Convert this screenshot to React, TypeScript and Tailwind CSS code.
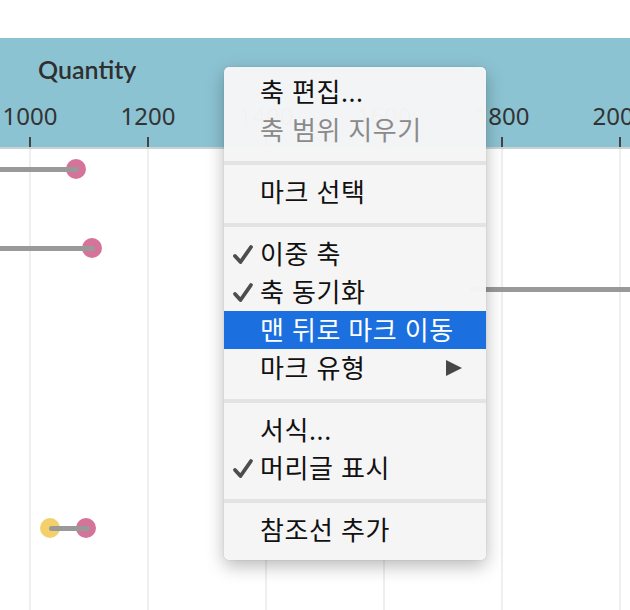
import React from 'react';

const ticks = [1000, 1200, 1400, 1600, 1800, 2000];

type Item = { label: string; check?: boolean; disabled?: boolean; active?: boolean; submenu?: boolean } | 'sep';

const items: Item[] = [
  { label: '축 편집...' },
  { label: '축 범위 지우기', disabled: true },
  'sep',
  { label: '마크 선택' },
  'sep',
  { label: '이중 축', check: true },
  { label: '축 동기화', check: true },
  { label: '맨 뒤로 마크 이동', active: true },
  { label: '마크 유형', submenu: true },
  'sep',
  { label: '서식...' },
  { label: '머리글 표시', check: true },
  'sep',
  { label: '참조선 추가' },
];

const CheckMark = () => (
  <svg width="22" height="22" viewBox="0 0 22 22" className="absolute left-[8px] top-[9px]">
    <path d="M3 12 L8.5 18 L19 3" fill="none" stroke="#4d4d4d" strokeWidth="3.8" strokeLinecap="round" strokeLinejoin="round" />
  </svg>
);

const ContextMenu = () => (
  <div className="absolute left-[224px] top-[67px] w-[262px] rounded-[5px] bg-[#f5f5f5]/[0.985] pt-[6px] pb-[11px] shadow-[0_6px_18px_rgba(0,0,0,0.28),0_0_1px_rgba(0,0,0,0.3)]">
    {items.map((it, i) =>
      it === 'sep' ? (
        <div key={i} className="pt-[12px] pb-[8px]">
          <div className="h-[4px] bg-[#e3e3e3]" />
        </div>
      ) : (
        <div
          key={i}
          className={`relative flex h-[38px] items-center pl-[36px] text-[26px] font-normal leading-none tracking-[0.6px] ${
            it.active ? 'bg-[#1b6fdf] text-white' : it.disabled ? 'text-[#8a8a8a]' : 'text-[#111]'
          }`}
        >
          {it.check && <CheckMark />}
          <span>{it.label}</span>
          {it.submenu && (
            <svg width="18" height="18" viewBox="0 0 18 18" className="absolute left-[221px] top-[10px]">
              <path d="M1 1 L17 9 L1 17 Z" fill="#474747" />
            </svg>
          )}
        </div>
      )
    )}
  </div>
);

export default function App() {
  return (
    <div
      className="relative h-[610px] w-[630px] overflow-hidden bg-white"
      style={{ fontFamily: '"Noto Sans", "Noto Sans CJK KR", sans-serif' }}
    >
      <div className="h-[38px]" />
      <div className="flex h-[111px] flex-col border-b-2 border-[#c9d3d6] bg-[#8cc3d2]">
        <div
          className="pl-[38px] pt-[19px] text-[25px] font-semibold leading-none text-[#2f2f2f]"
          style={{ fontFamily: 'Lato, "Noto Sans", sans-serif' }}
        >
          Quantity
        </div>
        <div className="ml-[-29px] mt-auto flex">
          {ticks.map((t) => (
            <div key={t} className="flex w-[118px] shrink-0 flex-col items-center">
              <div className="text-[24px] leading-none text-[#333]">{t}</div>
              <div className="mt-[9px] h-[10px] w-[2px] bg-[#444]" />
            </div>
          ))}
        </div>
      </div>
      <div className="relative h-[461px]">
        <div className="ml-[-29px] flex h-full">
          {ticks.map((t) => (
            <div key={t} className="flex h-full w-[118px] shrink-0 justify-center">
              <div className="h-full w-[2px] bg-[#efefef]" />
            </div>
          ))}
        </div>
        {/* row 1 */}
        <div className="absolute left-[66px] top-[10px] h-[20px] w-[20px] rounded-full bg-[#d5739b]" />
        <div className="absolute left-0 top-[18px] h-[5px] w-[79px] rounded-r-full bg-[#999]" />
        {/* row 2 */}
        <div className="absolute left-[82px] top-[89px] h-[20px] w-[20px] rounded-full bg-[#d5739b]" />
        <div className="absolute left-0 top-[97px] h-[5px] w-[95px] rounded-r-full bg-[#999]" />
        {/* row 3 */}
        <div className="absolute left-[470px] top-[138px] h-[5px] w-[170px] bg-[#999]" />
        {/* row 4 */}
        <div className="absolute left-[40px] top-[369px] h-[20px] w-[20px] rounded-full bg-[#f3d06a]" />
        <div className="absolute left-[76px] top-[369px] h-[20px] w-[20px] rounded-full bg-[#d5739b]" />
        <div className="absolute left-[49px] top-[377px] h-[5px] w-[41px] rounded-full bg-[#999]" />
      </div>
      <ContextMenu />
    </div>
  );
}
